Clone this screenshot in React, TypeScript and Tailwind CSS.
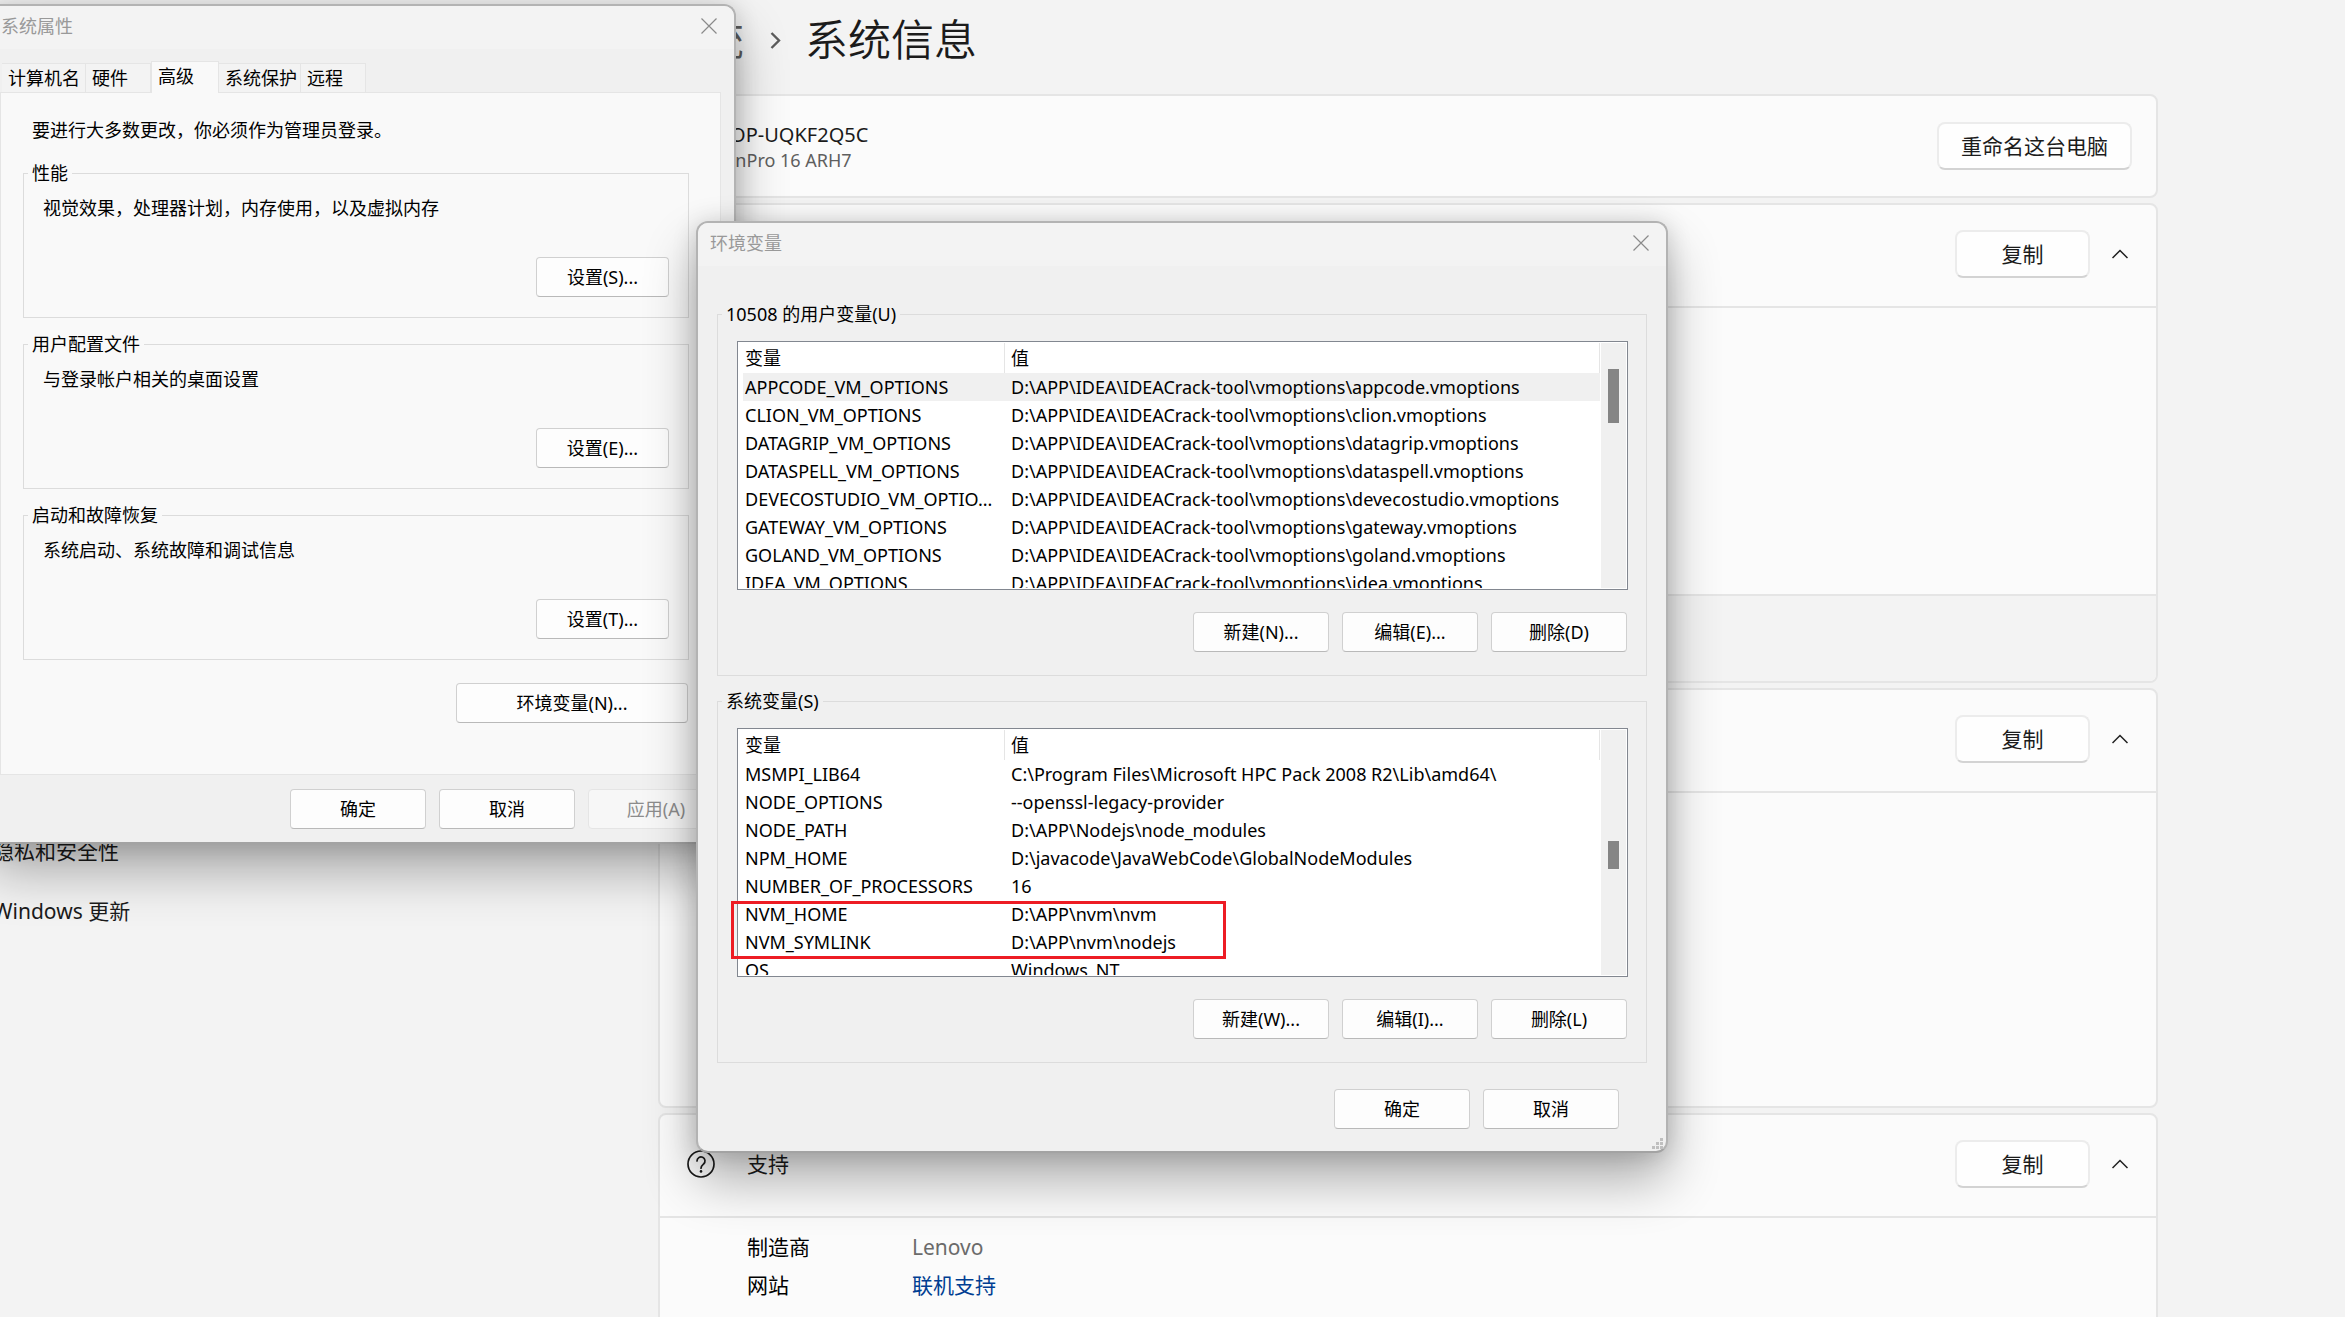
import React, { ReactNode } from 'react';
import { clsx } from 'clsx';

interface Variable {
  name: string;
  value: string;
}

const userVariables: Variable[] = [
  { name: 'APPCODE_VM_OPTIONS', value: 'D:\\APP\\IDEA\\IDEACrack-tool\\vmoptions\\appcode.vmoptions' },
  { name: 'CLION_VM_OPTIONS', value: 'D:\\APP\\IDEA\\IDEACrack-tool\\vmoptions\\clion.vmoptions' },
  { name: 'DATAGRIP_VM_OPTIONS', value: 'D:\\APP\\IDEA\\IDEACrack-tool\\vmoptions\\datagrip.vmoptions' },
  { name: 'DATASPELL_VM_OPTIONS', value: 'D:\\APP\\IDEA\\IDEACrack-tool\\vmoptions\\dataspell.vmoptions' },
  { name: 'DEVECOSTUDIO_VM_OPTIO...', value: 'D:\\APP\\IDEA\\IDEACrack-tool\\vmoptions\\devecostudio.vmoptions' },
  { name: 'GATEWAY_VM_OPTIONS', value: 'D:\\APP\\IDEA\\IDEACrack-tool\\vmoptions\\gateway.vmoptions' },
  { name: 'GOLAND_VM_OPTIONS', value: 'D:\\APP\\IDEA\\IDEACrack-tool\\vmoptions\\goland.vmoptions' },
  { name: 'IDEA_VM_OPTIONS', value: 'D:\\APP\\IDEA\\IDEACrack-tool\\vmoptions\\idea.vmoptions' },
];

const systemVariables: Variable[] = [
  { name: 'MSMPI_LIB64', value: 'C:\\Program Files\\Microsoft HPC Pack 2008 R2\\Lib\\amd64\\' },
  { name: 'NODE_OPTIONS', value: '--openssl-legacy-provider' },
  { name: 'NODE_PATH', value: 'D:\\APP\\Nodejs\\node_modules' },
  { name: 'NPM_HOME', value: 'D:\\javacode\\JavaWebCode\\GlobalNodeModules' },
  { name: 'NUMBER_OF_PROCESSORS', value: '16' },
  { name: 'NVM_HOME', value: 'D:\\APP\\nvm\\nvm' },
  { name: 'NVM_SYMLINK', value: 'D:\\APP\\nvm\\nodejs' },
  { name: 'OS', value: 'Windows_NT' },
];

const tabs = [
  { label: '计算机名', width: 'w-[84px]' },
  { label: '硬件', width: 'w-[65px]' },
  { label: '高级', width: 'w-[68px]', active: true },
  { label: '系统保护', width: 'w-[82px]' },
  { label: '远程', width: 'w-[65px]' },
];

const sections = [
  { title: '性能', text: '视觉效果，处理器计划，内存使用，以及虚拟内存', button: '设置(S)...' },
  { title: '用户配置文件', text: '与登录帐户相关的桌面设置', button: '设置(E)...' },
  { title: '启动和故障恢复', text: '系统启动、系统故障和调试信息', button: '设置(T)...' },
];

function DialogButton({ children, className, disabled }: { children: ReactNode; className?: string; disabled?: boolean }) {
  return (
    <button
      disabled={disabled}
      className={clsx(
        'h-10 rounded-[4px] border text-center',
        disabled
          ? 'border-[#e5e5e5] bg-[#f7f7f7] text-[#8c8c8c]'
          : 'border-[#d0d0d0] border-b-[#b9b9b9] bg-[#fdfdfd]',
        className ?? 'w-[136px]',
      )}
    >
      {children}
    </button>
  );
}

function Dialog({ title, className, children }: { title: string; className: string; children: ReactNode }) {
  return (
    <section
      aria-label={title}
      className={clsx(
        'absolute overflow-hidden rounded-xl border-2 border-[#b3b3b3] border-b-[#a3a3a3] bg-[#f0f0f0] text-lg leading-6 text-black shadow-[0_28px_52px_rgba(0,0,0,0.3),0_2px_24px_rgba(0,0,0,0.16)]',
        className,
      )}
    >
      <header className="flex h-[43px] items-center justify-between bg-[#f3f3f3] pb-[3px] pl-3 pr-[17px] text-[#999]">
        <h2>{title}</h2>
        <button aria-label="关闭">
          <svg width="16" height="16" viewBox="0 0 16 16" fill="none" stroke="#8a8a8a" strokeWidth="1.2">
            <path d="M0.5 0.5 15.5 15.5M15.5 0.5 0.5 15.5" />
          </svg>
        </button>
      </header>
      {children}
    </section>
  );
}

function Group({ title, className, children }: { title: string; className?: string; children: ReactNode }) {
  return (
    <fieldset className={clsx('border border-[#dcdcdc] pl-[19px] pr-[18px]', className)}>
      <legend className="-ml-[15px] px-1">{title}</legend>
      {children}
    </fieldset>
  );
}

function VariableList({ label, rows, selected, thumb }: { label: string; rows: Variable[]; selected?: number; thumb: string }) {
  return (
    <div className="flex h-[249px] overflow-hidden border border-[#828790] bg-white p-px">
      <div className="min-w-0 flex-1 overflow-hidden pl-1">
        <table aria-label={label} className="w-full table-fixed border-separate border-spacing-0 text-left">
          <thead>
            <tr className="h-[30px]">
              <th className="w-[262px] border-r border-[#e5e5e5] p-0 pl-0.5 font-normal">变量</th>
              <th className="border-r border-[#e5e5e5] p-0 pl-1.5 font-normal">值</th>
            </tr>
          </thead>
          <tbody>
            {rows.map((row, i) => (
              <tr key={row.name} className={clsx('h-7 whitespace-nowrap', i === selected && 'bg-[#f0f0f0]')}>
                <td className="p-0 pl-0.5">{row.name}</td>
                <td className="p-0 pl-1.5">{row.value}</td>
              </tr>
            ))}
          </tbody>
        </table>
      </div>
      <div className="ml-px flex w-[25px] justify-center bg-[#f0f0f0]">
        <div className={clsx('w-[11px] bg-[#858585]', thumb)} />
      </div>
    </div>
  );
}

function SystemProperties() {
  return (
    <Dialog title="系统属性" className="-left-[13px] top-1 w-[749px]">
      <div role="tablist" className="flex h-11 items-end pl-[13px]">
        {tabs.map((tab) => (
          <button
            key={tab.label}
            role="tab"
            aria-selected={!!tab.active}
            className={clsx(
              'whitespace-nowrap border border-[#e5e5e5] pl-1.5 text-left',
              tab.width,
              tab.active ? 'relative z-10 h-8 border-b-0 bg-[#f9f9f9] pb-1' : 'h-[30px] border-l-0 bg-[#f3f3f3]',
            )}
          >
            {tab.label}
          </button>
        ))}
      </div>
      <div className="-mt-px ml-[11px] mr-[13px] border border-[#e5e5e5] bg-[#f9f9f9] pb-[51px] pl-[22px] pr-[31px] pt-[25px]">
        <p className="pl-[9px]">要进行大多数更改，你必须作为管理员登录。</p>
        <div className="mt-[19px] flex flex-col gap-[14px]">
          {sections.map((section) => (
            <Group key={section.title} title={section.title} className="pb-5">
              <p className="mt-[11px]">{section.text}</p>
              <div className="mt-[37px] flex justify-end pr-px">
                <DialogButton className="w-[133px]">{section.button}</DialogButton>
              </div>
            </Group>
          ))}
        </div>
        <div className="mt-[23px] flex justify-end pr-px">
          <DialogButton className="w-[232px]">环境变量(N)...</DialogButton>
        </div>
      </div>
      <footer className="flex justify-end gap-[13px] pb-[13px] pr-[10px] pt-[14px]">
        <DialogButton>确定</DialogButton>
        <DialogButton>取消</DialogButton>
        <DialogButton disabled>应用(A)</DialogButton>
      </footer>
    </Dialog>
  );
}

function EnvironmentVariables() {
  return (
    <Dialog title="环境变量" className="left-[696px] top-[221px] w-[972px]">
      <div className="mt-9 flex flex-col gap-[13px] px-[19px]">
        <Group title="10508 的用户变量(U)" className="pb-[23px]">
          <div className="mt-[15px]">
            <VariableList label="用户变量" rows={userVariables} selected={0} thumb="mt-[26px] h-[54px]" />
          </div>
          <div className="mt-[22px] flex justify-end gap-[13px] pr-px">
            <DialogButton>新建(N)...</DialogButton>
            <DialogButton>编辑(E)...</DialogButton>
            <DialogButton>删除(D)</DialogButton>
          </div>
        </Group>
        <Group title="系统变量(S)" className="pb-[23px]">
          <div className="relative mt-[15px]">
            <VariableList label="系统变量" rows={systemVariables} thumb="mt-[111px] h-7" />
            {/* marks the two NVM entries */}
            <div className="absolute -left-1.5 top-[173px] h-[58px] w-[495px] border-[3px] border-[#ed1c24]" />
          </div>
          <div className="mt-[22px] flex justify-end gap-[13px] pr-px">
            <DialogButton>新建(W)...</DialogButton>
            <DialogButton>编辑(I)...</DialogButton>
            <DialogButton>删除(L)</DialogButton>
          </div>
        </Group>
      </div>
      <footer className="flex justify-end gap-[13px] pb-[22px] pr-[47px] pt-[26px]">
        <DialogButton>确定</DialogButton>
        <DialogButton>取消</DialogButton>
      </footer>
      <svg className="absolute bottom-0.5 right-[3px]" width="11" height="11" viewBox="0 0 11 11" fill="#bfbfbf">
        <path d="M8 0h3v3H8zM4 4h3v3H4zM8 4h3v3H8zM0 8h3v3H0zM4 8h3v3H4zM8 8h3v3H8z" />
      </svg>
    </Dialog>
  );
}

function SettingsButton({ children, className }: { children: ReactNode; className: string }) {
  return (
    <button className={clsx('h-12 rounded-lg border-2 border-[#ececec] border-b-[#d3d3d3] bg-[#fefefe]', className)}>
      {children}
    </button>
  );
}

function Card({ icon, title, children }: { icon?: ReactNode; title?: string; children: ReactNode }) {
  return (
    <section className="overflow-hidden rounded-lg border-2 border-[#e5e5e5] bg-[#fbfbfb]">
      <header className="flex h-[101px] items-center pb-[3px] pl-[27px] pr-7">
        {icon}
        <h3 className="ml-8">{title}</h3>
        <SettingsButton className="ml-auto w-[135px]">复制</SettingsButton>
        <button aria-label="收起" className="ml-[22px]">
          <svg width="16" height="10" viewBox="0 0 16 10" fill="none" stroke="#1f1f1f" strokeWidth="1.5">
            <path d="M0.5 9 8 1.5 15.5 9" />
          </svg>
        </button>
      </header>
      {children}
    </section>
  );
}

function HelpIcon() {
  return (
    <svg width="28" height="28" viewBox="0 0 28 28" fill="none" stroke="#1b1b1b" strokeWidth="1.7">
      <circle cx="14" cy="14" r="13" />
      <path d="M10 11a4 4 0 1 1 6.6 3c-1.6 1.4-2.6 2.2-2.6 4.2" strokeLinecap="round" />
      <circle cx="14" cy="21.4" r="1.3" fill="#1b1b1b" stroke="none" />
    </svg>
  );
}

export default function App() {
  return (
    <div className="relative flex h-screen overflow-hidden bg-[#f3f3f3] font-['Noto_Sans','Noto_Sans_CJK_SC',sans-serif] text-[21px] leading-[26px] text-[#1b1b1b]">
      <nav className="-ml-[7px] w-[665px] shrink-0 pt-[821px]">
        <a href="#privacy" className="flex h-[60px] items-center">隐私和安全性</a>
        <a href="#update" className="flex h-[60px] items-center">Windows 更新</a>
      </nav>

      <main className="min-w-0 flex-1 pr-[187px]">
        <div className="mb-[14px] flex h-20 items-center text-[43px] font-[350] leading-[60px]">
          <a href="#system" className="text-[#5c5c5c]">系统</a>
          <svg className="ml-[26px] mr-6" width="11" height="17" viewBox="0 0 11 17" fill="none" stroke="#5c5c5c" strokeWidth="2.4">
            <path d="M1.5 1 9 8.5 1.5 16" />
          </svg>
          <h1>系统信息</h1>
        </div>

        <div className="flex flex-col gap-[5px]">
          <section className="flex h-[104px] items-center justify-between rounded-lg border-2 border-[#e5e5e5] bg-[#fbfbfb] px-6">
            <div className="pt-0.5">
              <p className="text-xl leading-[26px]">LAPTOP-UQKF2Q5C</p>
              <p className="text-lg leading-6 text-[#5f5f5f]">XiaoXinPro 16 ARH7</p>
            </div>
            <SettingsButton className="w-[195px]">重命名这台电脑</SettingsButton>
          </section>

          <Card>
            <div className="h-[288px] border-t-2 border-[#e5e5e5]" />
            <div className="h-[87px] border-t-2 border-[#e5e5e5] bg-[#f3f3f3]" />
          </Card>

          <Card>
            <div className="h-[315px] border-t-2 border-[#e5e5e5]" />
          </Card>

          <Card icon={<HelpIcon />} title="支持">
            <dl className="grid h-[200px] grid-cols-[165px_1fr] content-start border-t-2 border-[#e5e5e5] pl-[87px] pt-[10px] leading-[38px]">
              <dt className="text-black">制造商</dt>
              <dd className="text-[#6b6b6b]">Lenovo</dd>
              <dt className="text-black">网站</dt>
              <dd>
                <a href="#support" className="text-[#003e92]">联机支持</a>
              </dd>
            </dl>
          </Card>
        </div>
      </main>

      <SystemProperties />
      <EnvironmentVariables />
    </div>
  );
}
